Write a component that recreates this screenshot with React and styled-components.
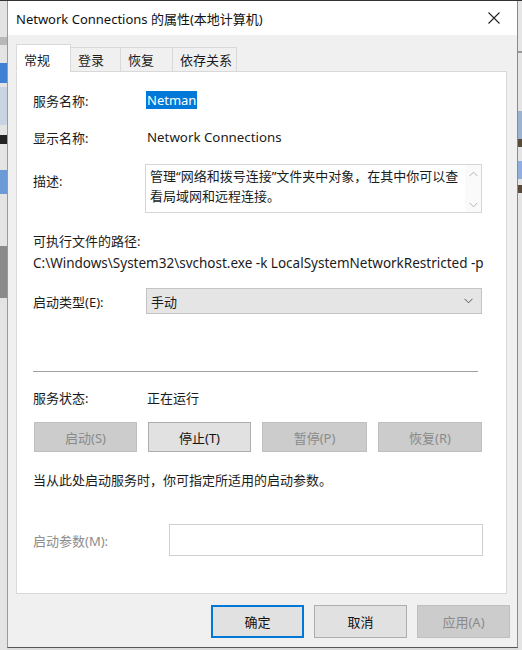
import React from "react";
import styled, { createGlobalStyle } from "styled-components";

const Global = createGlobalStyle`
  html, body { margin: 0; padding: 0; }
  body {
    width: 522px; height: 650px; overflow: hidden;
    background: #d9d9d9;
    font-family: "Noto Sans", "Noto Sans CJK SC", sans-serif;
    color: #1b1b1b;
  }
`;

const Desktop = styled.div`
  display: flex;
  width: 522px;
  height: 650px;
  border-top: 1px solid #333;
  box-sizing: border-box;
  background: #dcdcdc;
`;

const Strip = styled.div`
  width: ${p => p.$w}px;
  flex: none;
  display: flex;
  flex-direction: column;
  background: #e4e4e4;
  overflow: hidden;
`;

const Bit = styled.div`
  height: ${p => p.$h}px;
  margin-top: ${p => p.$mt || 0}px;
  background: ${p => p.$c};
  flex: none;
`;

const Dialog = styled.div`
  width: 509px;
  height: 646px;
  flex: none;
  display: flex;
  flex-direction: column;
  border-left: 1px solid #9a9a9a;
  border-right: 1px solid #8a8a8a;
  border-bottom: 1px solid #555;
  background: #f0f0f0;
`;

const TitleBar = styled.div`
  height: 34px;
  background: #fff;
  display: flex;
  align-items: center;
  justify-content: space-between;
  padding: 0 8px 0 8px;
  font-size: 13px;
  color: #111;
`;

const CloseBtn = styled.div`
  width: 30px;
  height: 30px;
  display: flex;
  align-items: center;
  justify-content: center;
`;

const Body = styled.div`
  flex: 1;
  display: flex;
  flex-direction: column;
  padding: 9px 10px 0 8px;
`;

const TabStrip = styled.div`
  display: flex;
  align-items: flex-end;
  height: 28px;
  position: relative;
  z-index: 1;
  margin-bottom: -1px;
`;

const Tab = styled.div`
  height: ${p => (p.$active ? 28 : 25)}px;
  box-sizing: border-box;
  padding: ${p => (p.$active ? "2px 0 0 7px" : "0 0 0 7px")};
  display: flex;
  align-items: center;
  flex: none;
  white-space: nowrap;
  font-size: 13px;
  background: ${p => (p.$active ? "#fff" : "#f0f0f0")};
  border: 1px solid #d9d9d9;
  border-bottom: ${p => (p.$active ? "1px solid #fff" : "1px solid #d9d9d9")};
  margin-left: ${p => (p.$first ? 0 : -1)}px;
  width: ${p => p.$w}px;
`;

const Panel = styled.div`
  height: 523px;
  box-sizing: border-box;
  background: #fff;
  border: 1px solid #d9d9d9;
  padding: 18px 22px 0 16px;
  display: flex;
  flex-direction: column;
  font-size: 13px;
`;

const Row = styled.div`
  display: flex;
  align-items: ${p => p.$align || "center"};
  margin-top: ${p => p.$mt || 0}px;
  min-height: 20px;
`;

const Label = styled.div`
  width: ${p => p.$w || 114}px;
  flex: none;
  color: ${p => (p.$disabled ? "#8c8c8c" : "#1b1b1b")};
  padding-top: ${p => p.$pt || 0}px;
`;

const Selected = styled.span`
  background: #0078d7;
  color: #fff;
  padding: 0 1px;
  line-height: 19px;
  margin-left: -1px;
`;

const Value = styled.div`
  color: #1b1b1b;
  font-size: ${p => p.$fs || 13}px;
`;

const DescBox = styled.div`
  width: 337px;
  height: 49px;
  box-sizing: border-box;
  margin-left: -2px;
  border: 1px solid #d5d5d5;
  display: flex;
  background: #fff;
`;

const DescText = styled.div`
  flex: 1;
  padding: 1px 4px 0;
  line-height: 20px;
  font-size: 13px;
`;

const ScrollBar = styled.div`
  width: 16px;
  display: flex;
  flex-direction: column;
  justify-content: space-between;
  align-items: center;
  padding: 6px 0 4px;
  background: #fafafa;
`;

const Plain = styled.div`
  margin-top: ${p => p.$mt || 0}px;
  line-height: 20px;
  white-space: nowrap;
  font-size: ${p => p.$fs || 13}px;
  color: ${p => p.$c || "#1b1b1b"};
`;

const Combo = styled.div`
  width: 336px;
  height: 26px;
  box-sizing: border-box;
  margin-left: -1px;
  background: #e5e5e5;
  border: 1px solid #c3c3c3;
  display: flex;
  align-items: center;
  justify-content: space-between;
  padding: 0 8px 0 4px;
`;

const Separator = styled.div`
  height: 1px;
  background: #a0a0a0;
  margin-top: 57px;
  width: 445px;
`;

const BtnRow = styled.div`
  display: flex;
  gap: 11px;
  margin-top: 15px;
  margin-left: 1px;
`;

const Button = styled.div`
  width: ${p => p.$w || 103}px;
  height: ${p => p.$h || 30}px;
  box-sizing: border-box;
  display: flex;
  align-items: center;
  justify-content: center;
  font-size: 13px;
  background: ${p => (p.$disabled ? "#cccccc" : "#e1e1e1")};
  color: ${p => (p.$disabled ? "#8a8a8a" : "#111")};
  border: ${p =>
    p.$focus ? "2px solid #0078d7" : p.$disabled ? "1px solid #bfbfbf" : "1px solid #adadad"};
`;

const Input = styled.div`
  width: 314px;
  height: 32px;
  box-sizing: border-box;
  border: 1px solid #cfcfcf;
  background: #fff;
`;

const Footer = styled.div`
  display: flex;
  justify-content: flex-end;
  gap: 10px;
  margin-top: 11px;
  margin-right: -3px;
`;

const Chevron = ({ dir = "down", color = "#666", w = 9 }) => (
  <svg width={w} height={6} viewBox="0 0 9 6">
    <path
      d={dir === "down" ? "M0.5 0.8 L4.5 4.8 L8.5 0.8" : "M0.5 5.2 L4.5 1.2 L8.5 5.2"}
      fill="none"
      stroke={color}
      strokeWidth="1"
    />
  </svg>
);

export default function App() {
  return (
    <>
      <Global />
      <Desktop>
        <Strip $w={7}>
          <Bit $h={36} $c="#e3e3e3" />
          <Bit $h={8} $c="#b8b8b8" />
          <Bit $h={20} $mt={18} $c="#3f7fd4" />
          <Bit $h={38} $mt={4} $c="#c9d4e2" />
          <Bit $h={9} $mt={10} $c="#222" />
          <Bit $h={24} $mt={26} $c="#6b9ad6" />
          <Bit $h={52} $mt={52} $c="#8a8a8a" />
        </Strip>
        <Dialog>
          <TitleBar>
            <span>Network Connections 的属性(本地计算机)</span>
            <CloseBtn>
              <svg width="12" height="12" viewBox="0 0 12 12">
                <path d="M0.5 0.5 L11.5 11.5 M11.5 0.5 L0.5 11.5" stroke="#222" strokeWidth="1.1" />
              </svg>
            </CloseBtn>
          </TitleBar>
          <Body>
            <TabStrip>
              <Tab $active $first $w={55}>常规</Tab>
              <Tab $w={51}>登录</Tab>
              <Tab $w={53}>恢复</Tab>
              <Tab $w={65}>依存关系</Tab>
            </TabStrip>
            <Panel>
              <Row>
                <Label>服务名称:</Label>
                <Value><Selected>Netman</Selected></Value>
              </Row>
              <Row $mt={17}>
                <Label>显示名称:</Label>
                <Value $fs={13.3}>Network Connections</Value>
              </Row>
              <Row $mt={17} $align="flex-start">
                <Label $pt={7}>描述:</Label>
                <DescBox>
                  <DescText>
                    管理“网络和拨号连接”文件夹中对象，在其中你可以查看局域网和远程连接。
                  </DescText>
                  <ScrollBar>
                    <Chevron dir="up" color="#b5b5b5" w={9} />
                    <Chevron dir="down" color="#b5b5b5" w={9} />
                  </ScrollBar>
                </DescBox>
              </Row>
              <Plain $mt={18}>可执行文件的路径:</Plain>
              <Plain $mt={2} $fs={13.5}>C:\Windows\System32\svchost.exe -k LocalSystemNetworkRestricted -p</Plain>
              <Row $mt={15}>
                <Label>启动类型(E):</Label>
                <Combo>
                  <span>手动</span>
                  <Chevron dir="down" color="#555" />
                </Combo>
              </Row>
              <Separator />
              <Row $mt={15}>
                <Label>服务状态:</Label>
                <Value>正在运行</Value>
              </Row>
              <BtnRow>
                <Button $disabled>启动(S)</Button>
                <Button>停止(T)</Button>
                <Button $disabled $w={105}>暂停(P)</Button>
                <Button $disabled $w={104}>恢复(R)</Button>
              </BtnRow>
              <Plain $mt={18}>当从此处启动服务时，你可指定所适用的启动参数。</Plain>
              <Row $mt={34}>
                <Label $w={136} $disabled>启动参数(M):</Label>
                <Input />
              </Row>
            </Panel>
            <Footer>
              <Button $focus $w={93} $h={33}>确定</Button>
              <Button $w={93} $h={33}>取消</Button>
              <Button $disabled $w={93} $h={33}>应用(A)</Button>
            </Footer>
          </Body>
        </Dialog>
        <Strip $w={5}>
          <Bit $h={50} $c="#e6e6e6" />
          <Bit $h={2} $c="#999" />
          <Bit $h={28} $mt={58} $c="#9db3d3" />
          <Bit $h={8} $c="#5a4a3a" />
          <Bit $h={18} $mt={14} $c="#8fb0dc" />
          <Bit $h={8} $mt={6} $c="#5a4a3a" />
        </Strip>
      </Desktop>
    </>
  );
}
